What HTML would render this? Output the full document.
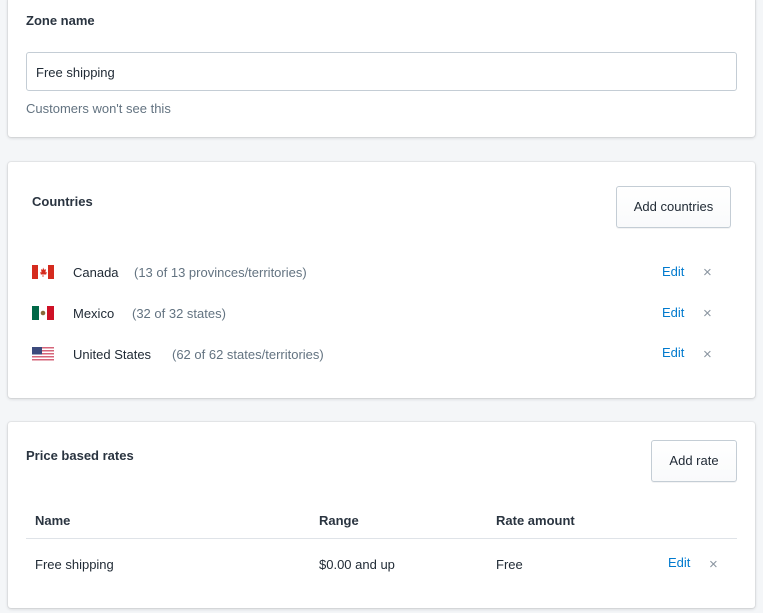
<!DOCTYPE html>
<html><head><style>
body{margin:0;width:763px;height:613px;background:#f4f6f8;font-family:"Liberation Sans",sans-serif;font-size:13px;color:#212b36;position:relative;overflow:hidden}
.card{position:absolute;left:8px;width:747px;background:#fff;border-radius:3px;box-shadow:0 0 0 1px rgba(63,63,68,.06),0 1px 3px rgba(63,63,68,.2)}
.a{position:absolute;white-space:nowrap}
.h{font-weight:bold;font-size:13px;color:#2a3440}
.g{color:#637381}
.btn{position:absolute;border:1px solid #c4cdd5;border-radius:3px;background:linear-gradient(#fff,#f9fafb);box-shadow:0 1px 0 rgba(22,29,37,.05);text-align:center;box-sizing:border-box}
.e{color:#007ace}
.x{color:#8a95a0;font-size:15px}
.flag{position:absolute;width:22px;height:14px}
</style></head><body>
<div class="card" style="top:-4px;height:141px">
 <div class="a h" style="left:18px;top:17px">Zone name</div>
 <div style="position:absolute;left:18px;top:56px;width:711px;height:39px;border:1px solid #c4cdd5;border-radius:3px;box-sizing:border-box"></div>
 <div class="a" style="left:28px;top:69px">Free shipping</div>
 <div class="a g" style="left:18px;top:105px">Customers won't see this</div>
</div>
<div class="card" style="top:162px;height:236px">
 <div class="a h" style="left:24px;top:32px">Countries</div>
 <div class="btn" style="left:608px;top:24px;width:115px;height:42px;line-height:40px">Add countries</div>
 <svg class="flag" style="left:24px;top:103px" viewBox="0 0 22 14"><rect width="22" height="14" fill="#fff"/><rect width="6" height="14" fill="#d52b1e"/><rect x="16" width="6" height="14" fill="#d52b1e"/><path d="M11 2.5l1.2 2.3 1.8-.6-.6 3.3 1.4-.6-.6 2.6H8.8l-.6-2.6 1.4.6-.6-3.3 1.8.6zM10.6 10h.8v2h-.8z" fill="#d52b1e"/></svg>
 <div class="a" style="left:65px;top:103px">Canada</div><div class="a g" style="left:126px;top:103px">(13 of 13 provinces/territories)</div>
 <div class="a e" style="left:654px;top:102px">Edit</div><div class="a x" style="left:695px;top:102px">×</div>
 <svg class="flag" style="left:24px;top:144px" viewBox="0 0 22 14"><rect width="22" height="14" fill="#fff"/><rect width="7" height="14" fill="#006847"/><rect x="15" width="7" height="14" fill="#ce1126"/><circle cx="11" cy="7" r="2.3" fill="#8a6a3a"/></svg>
 <div class="a" style="left:65px;top:144px">Mexico</div><div class="a g" style="left:124px;top:144px">(32 of 32 states)</div>
 <div class="a e" style="left:654px;top:143px">Edit</div><div class="a x" style="left:695px;top:143px">×</div>
 <svg class="flag" style="left:24px;top:185px" viewBox="0 0 22 14"><rect width="22" height="14" fill="#fff"/><g fill="#d5657a"><rect y="0" width="22" height="1.5"/><rect y="3" width="22" height="1.5"/><rect y="6" width="22" height="1.5"/><rect y="9" width="22" height="1.5"/><rect y="12" width="22" height="1.5"/></g><rect width="10" height="7.5" fill="#3c4a7c"/></svg>
 <div class="a" style="left:65px;top:185px">United States</div><div class="a g" style="left:164px;top:185px">(62 of 62 states/territories)</div>
 <div class="a e" style="left:654px;top:183px">Edit</div><div class="a x" style="left:695px;top:184px">×</div>
</div>
<div class="card" style="top:422px;height:186px">
 <div class="a h" style="left:18px;top:26px">Price based rates</div>
 <div class="btn" style="left:643px;top:18px;width:86px;height:42px;line-height:40px">Add rate</div>
 <div class="a h" style="left:27px;top:91px">Name</div>
 <div class="a h" style="left:311px;top:91px">Range</div>
 <div class="a h" style="left:488px;top:91px">Rate amount</div>
 <div style="position:absolute;left:18px;top:116px;width:711px;height:1px;background:#dfe3e8"></div>
 <div class="a" style="left:27px;top:135px">Free shipping</div>
 <div class="a" style="left:311px;top:135px">$0.00 and up</div>
 <div class="a" style="left:488px;top:135px">Free</div>
 <div class="a e" style="left:660px;top:133px">Edit</div><div class="a x" style="left:701px;top:134px">×</div>
</div>
</body></html>
